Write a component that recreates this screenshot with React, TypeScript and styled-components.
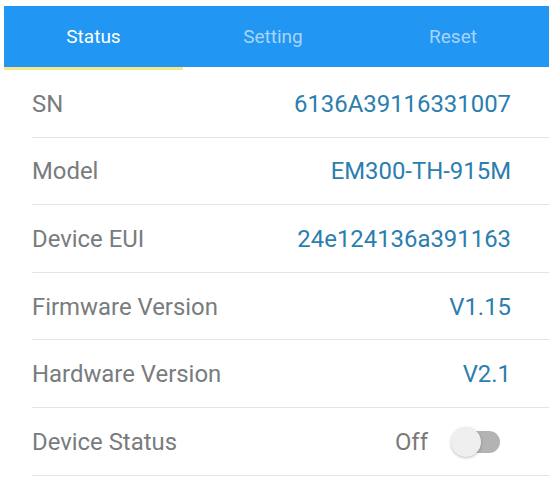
import React from "react";
import styled, { createGlobalStyle } from "styled-components";

const Global = createGlobalStyle`
  html, body { margin: 0; padding: 0; background: #ffffff; }
  body { font-family: Roboto, "Noto Sans", Arial, sans-serif; }
`;

const Page = styled.div`
  width: 549px;
  height: 482px;
  padding: 6px 0 0 4px;
  box-sizing: border-box;
  background: #ffffff;
  overflow: hidden;
`;

const TabBar = styled.div`
  display: grid;
  grid-template-columns: 179px 180px 180px 1fr;
  background: linear-gradient(#2196f3, #2196f3) top / 100% 61px no-repeat;
`;

const Tab = styled.div`
  display: flex;
  flex-direction: column;
`;

const TabLabel = styled.div<{ $active?: boolean }>`
  height: 61px;
  background: #2196f3;
  display: flex;
  align-items: center;
  justify-content: center;
  font-size: 19px;
  color: ${(p) => (p.$active ? "#ffffff" : "rgba(255,255,255,0.62)")};
  padding-bottom: 1px;
  box-sizing: border-box;
`;

const Indicator = styled.div<{ $active?: boolean }>`
  height: 3px;
  background: ${(p) => (p.$active ? "#f6e78c" : "transparent")};
`;

const List = styled.div`
  padding-left: 28px;
`;

const Row = styled.div`
  height: 67.6px;
  box-sizing: border-box;
  border-bottom: 1.5px solid #e4e4e4;
  display: flex;
  align-items: center;
  justify-content: space-between;
  padding-right: 38px;
  padding-top: 1px;
  font-size: 23.9px;
`;

const Label = styled.span`
  color: #787c7e;
`;

const Value = styled.span`
  color: #2b7eae;
`;

const SwitchWrap = styled.div`
  display: flex;
  align-items: center;
  gap: 27px;
  margin-right: 11px;
`;

const OffText = styled.span`
  color: #7a7a7a;
`;

const Track = styled.div`
  position: relative;
  width: 45px;
  height: 22px;
  border-radius: 11px;
  background: #b3b3b3;
`;

const Knob = styled.div`
  position: absolute;
  left: -4px;
  top: -4px;
  width: 30px;
  height: 30px;
  border-radius: 50%;
  background: #efefef;
  box-shadow: 0 1px 3px rgba(0, 0, 0, 0.25);
`;

const rows: { label: string; value: string }[] = [
  { label: "SN", value: "6136A39116331007" },
  { label: "Model", value: "EM300-TH-915M" },
  { label: "Device EUI", value: "24e124136a391163" },
  { label: "Firmware Version", value: "V1.15" },
  { label: "Hardware Version", value: "V2.1" },
];

const tabs = ["Status", "Setting", "Reset"];

export default function App() {
  return (
    <Page>
      <Global />
      <TabBar>
        {tabs.map((t, i) => (
          <Tab key={t}>
            <TabLabel $active={i === 0}>{t}</TabLabel>
            <Indicator $active={i === 0} />
          </Tab>
        ))}
      </TabBar>
      <List>
        {rows.map((r) => (
          <Row key={r.label}>
            <Label>{r.label}</Label>
            <Value>{r.value}</Value>
          </Row>
        ))}
        <Row>
          <Label>Device Status</Label>
          <SwitchWrap>
            <OffText>Off</OffText>
            <Track>
              <Knob />
            </Track>
          </SwitchWrap>
        </Row>
      </List>
    </Page>
  );
}
